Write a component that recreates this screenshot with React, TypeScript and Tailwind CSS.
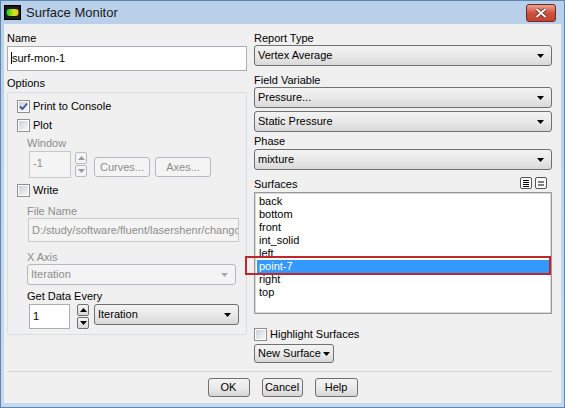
import React from 'react';

const font = { fontFamily: '"Liberation Sans", Arial, sans-serif' };

function Arrow({ disabled }: { disabled?: boolean }) {
  return (
    <svg width="7" height="4" viewBox="0 0 7 4" className="shrink-0">
      <path d="M0 0 H7 L3.5 4 Z" fill={disabled ? '#a8a8a8' : '#000'} />
    </svg>
  );
}

function Combo({
  value,
  disabled,
  className = '',
}: {
  value: string;
  disabled?: boolean;
  className?: string;
}) {
  return (
    <div
      className={`flex items-center justify-between rounded-[3px] border pl-[3px] pr-[7px] ${
        disabled
          ? 'border-[#b5b9bd] bg-[#f4f4f4] text-[#8d8d8d]'
          : 'border-[#707070] bg-gradient-to-b from-[#f3f3f3] via-[#e9e9e9] to-[#d9d9d9] text-black'
      } ${className}`}
    >
      <span className="whitespace-nowrap">{value}</span>
      <Arrow disabled={disabled} />
    </div>
  );
}

function Check({ checked }: { checked?: boolean }) {
  return (
    <span className="flex h-[13px] w-[13px] shrink-0 items-center justify-center border border-[#8e8f8f] bg-white">
      <span className="flex h-[9px] w-[9px] items-center justify-center bg-gradient-to-br from-[#cdd1d7] to-[#f6f6f6]">
        {checked && (
          <svg width="9" height="9" viewBox="0 0 9 9">
            <path
              d="M1 4.5 L3.5 7 L8 1.5"
              fill="none"
              stroke="#3d5490"
              strokeWidth="1.8"
            />
          </svg>
        )}
      </span>
    </span>
  );
}

function CheckRow({ label, checked }: { label: string; checked?: boolean }) {
  return (
    <div className="flex h-[13px] items-center gap-[3px] leading-[13px]">
      <Check checked={checked} />
      <span>{label}</span>
    </div>
  );
}

function Spin({ disabled }: { disabled?: boolean }) {
  const box = disabled
    ? 'border-[#b8bcc0] bg-[#f4f4f4]'
    : 'border-[#707070] bg-gradient-to-b from-[#f5f5f5] to-[#d8d8d8]';
  const fill = disabled ? '#9a9a9a' : '#000';
  return (
    <div className="flex flex-col gap-[1px]">
      <div className={`flex h-[12px] w-[12px] items-center justify-center rounded-[2px] border ${box}`}>
        <svg width="7" height="4" viewBox="0 0 7 4">
          <path d="M0 4 H7 L3.5 0 Z" fill={fill} />
        </svg>
      </div>
      <div className={`flex h-[12px] w-[12px] items-center justify-center rounded-[2px] border ${box}`}>
        <svg width="7" height="4" viewBox="0 0 7 4">
          <path d="M0 0 H7 L3.5 4 Z" fill={fill} />
        </svg>
      </div>
    </div>
  );
}

function Button({
  children,
  disabled,
  className = '',
}: {
  children: React.ReactNode;
  disabled?: boolean;
  className?: string;
}) {
  return (
    <div
      className={`flex items-center justify-center rounded-[3px] border ${
        disabled
          ? 'border-[#b5b9bd] bg-[#f4f4f4] text-[#8d8d8d]'
          : 'border-[#707070] bg-gradient-to-b from-[#f3f3f3] via-[#ebebeb] to-[#d6d6d6] text-black'
      } ${className}`}
    >
      {children}
    </div>
  );
}

const surfaces = ['back', 'bottom', 'front', 'int_solid', 'left', 'point-7', 'right', 'top'];

export default function App() {
  return (
    <div
      className="flex h-[408px] w-[565px] flex-col border border-[#5f87ad] bg-gradient-to-b from-[#b9d0ea] to-[#c7d9ee] text-[11px] text-black"
      style={font}
    >
      {/* title bar */}
      <div className="flex h-[23px] items-center pl-[3px] pr-[8px]">
        <svg width="17" height="15" viewBox="0 0 17 15" className="mr-[5px]">
          <defs>
            <linearGradient id="ic" x1="0" y1="0" x2="1" y2="0">
              <stop offset="0" stopColor="#19c21e" />
              <stop offset="0.6" stopColor="#c8e81a" />
              <stop offset="1" stopColor="#f0c419" />
            </linearGradient>
          </defs>
          <rect x="0.5" y="0.5" width="16" height="14" fill="#1a1a1a" stroke="#000" />
          <rect x="2.5" y="4" width="12" height="7" rx="3" fill="url(#ic)" />
        </svg>
        <span className="text-[13px] text-[#1a1a1a]">Surface Monitor</span>
        <div className="ml-auto mt-[1px] flex h-[18px] w-[30px] items-center justify-center rounded-[3px] border border-[#6b2a22] bg-gradient-to-b from-[#e9a394] via-[#d0513c] to-[#c34330]">
          <svg width="12" height="10" viewBox="0 0 12 10">
            <path d="M1.5 1 L10.5 9 M10.5 1 L1.5 9" stroke="#5a1f17" strokeWidth="3.4" />
            <path d="M1.5 1 L10.5 9 M10.5 1 L1.5 9" stroke="#fff" strokeWidth="2" />
          </svg>
        </div>
      </div>

      {/* client area */}
      <div className="mx-[3px] mb-[4px] flex flex-1 flex-col bg-[#f0f0f0] pl-[3px] pr-[9px]">
        <div className="relative flex gap-[7px] pt-[8px]">
          {/* left column */}
          <div className="flex w-[240px] flex-col">
            <div className="h-[13px] leading-[13px]">Name</div>
            <div className="mt-[1px] h-[25px] border border-[#abadb3] bg-white pl-[3px] pt-[5px] leading-[13px]">
              <span className="border-l border-black pl-[0px]">surf-mon-1</span>
            </div>
            <div className="mt-[6px] h-[13px] leading-[13px]">Options</div>
            <div className="mt-[2px] flex h-[243px] flex-col rounded-[2px] border border-[#d5dfe5] pl-[9px] pr-[7px] pt-[7px]">
              <CheckRow label="Print to Console" checked />
              <div className="mt-[6px]">
                <CheckRow label="Plot" />
              </div>
              <div className="mt-[5px] h-[13px] pl-[10px] leading-[13px] text-[#8d8d8d]">Window</div>
              <div className="mt-[1px] flex h-[27px] items-start pl-[12px]">
                <div className="h-[27px] w-[42px] border border-[#c6c8cc] bg-[#f4f4f4] pl-[3px] pt-[5px] leading-[13px] text-[#8d8d8d]">
                  -1
                </div>
                <div className="ml-[4px] mt-[1px]">
                  <Spin disabled />
                </div>
                <Button disabled className="ml-[7px] mt-[6px] h-[20px] w-[56px]">
                  Curves...
                </Button>
                <Button disabled className="ml-[5px] mt-[6px] h-[20px] w-[56px]">
                  Axes...
                </Button>
              </div>
              <div className="mt-[6px]">
                <CheckRow label="Write" />
              </div>
              <div className="mt-[8px] h-[13px] pl-[10px] leading-[13px] text-[#8d8d8d]">File Name</div>
              <div className="ml-[11px] mt-[0px] h-[24px] overflow-hidden whitespace-nowrap border border-[#c6c8cc] bg-[#f4f4f4] pl-[3px] pt-[5px] leading-[13px] text-[#8d8d8d]">
                D:/study/software/fluent/lasershenr/changcheng
              </div>
              <div className="mt-[9px] h-[13px] pl-[10px] leading-[13px] text-[#8d8d8d]">X Axis</div>
              <Combo disabled value="Iteration" className="ml-[10px] mr-[3px] h-[21px]" />
              <div className="mt-[5px] h-[13px] pl-[10px] leading-[13px]">Get Data Every</div>
              <div className="mt-[1px] flex h-[25px] items-start pl-[12px]">
                <div className="h-[25px] w-[41px] border border-[#abadb3] bg-white pl-[3px] pt-[5px] leading-[13px]">1</div>
                <div className="ml-[7px] mt-[0px]">
                  <Spin />
                </div>
                <Combo value="Iteration" className="ml-[5px] h-[21px] flex-1" />
              </div>
            </div>
          </div>

          {/* right column */}
          <div className="flex flex-1 flex-col">
            <div className="h-[13px] leading-[13px]">Report Type</div>
            <Combo value="Vertex Average" className="h-[21px]" />
            <div className="mt-[8px] h-[13px] leading-[13px]">Field Variable</div>
            <Combo value="Pressure..." className="h-[21px]" />
            <Combo value="Static Pressure" className="mt-[3px] h-[21px]" />
            <div className="mt-[3px] h-[13px] leading-[13px]">Phase</div>
            <Combo value="mixture" className="mt-[1px] h-[21px]" />
            <div className="mt-[6px] flex h-[14px] items-center pr-[5px]">
              <span className="mt-[3px] leading-[13px]">Surfaces</span>
              <div className="ml-auto flex gap-[3px]">
                <div className="flex h-[12px] w-[12px] items-center justify-center rounded-[2px] border border-[#555] bg-white">
                  <svg width="6" height="7" viewBox="0 0 6 7">
                    <path d="M0 0.5 H6 M0 2.5 H6 M0 4.5 H6 M0 6.5 H6" stroke="#000" strokeWidth="1.2" />
                  </svg>
                </div>
                <div className="flex h-[12px] w-[12px] items-center justify-center rounded-[2px] border border-[#555] bg-white">
                  <svg width="6" height="5" viewBox="0 0 6 5">
                    <path d="M0 1 H6 M0 4 H6" stroke="#000" strokeWidth="1" />
                  </svg>
                </div>
              </div>
            </div>
            <div className="relative mt-[2px] h-[122px] border border-[#9a9a9a] bg-white">
              <div className="h-full border border-[#d8d8d8] px-[1px] pt-[1px]">
                {surfaces.map((s) => (
                  <div
                    key={s}
                    className={`h-[13px] pl-[2px] leading-[13px] ${
                      s === 'point-7' ? 'bg-[#3399ff] text-white' : ''
                    }`}
                  >
                    {s}
                  </div>
                ))}
              </div>
              <div className="pointer-events-none absolute left-[-10px] top-[63px] h-[19px] w-[306px] border-2 border-[#c0272d]" />
            </div>
            <div className="mt-[14px] flex items-center">
              <CheckRow label="Highlight Surfaces" />
            </div>
            <div className="mt-[3px] flex">
              <Button className="h-[19px] gap-[2px] px-[3px]">
                New Surface
                <Arrow />
              </Button>
            </div>
          </div>
        </div>

        {/* bottom buttons */}
        <div className="mt-[8px] border-t border-[#d7d7d7]" />
        <div className="flex justify-center gap-[12px] pl-[6px] pt-[6px]">
          <Button className="h-[19px] w-[42px]">OK</Button>
          <Button className="h-[19px] w-[41px]">Cancel</Button>
          <Button className="h-[19px] w-[43px]">Help</Button>
        </div>
      </div>
    </div>
  );
}
